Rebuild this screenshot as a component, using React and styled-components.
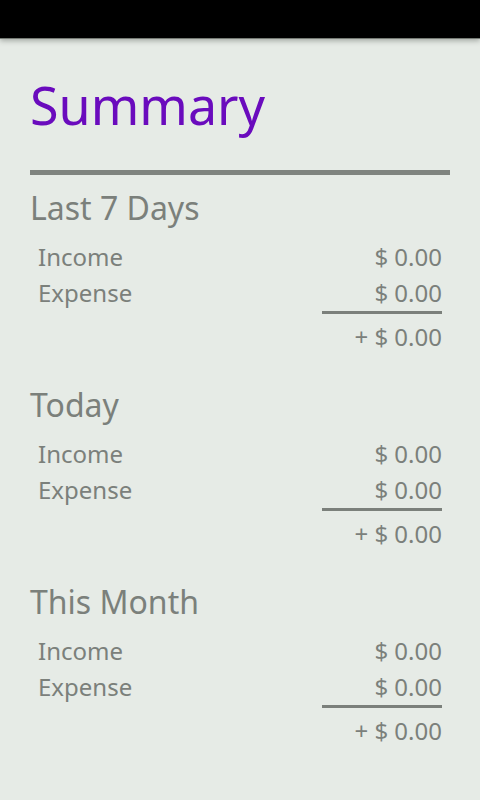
import styled, { createGlobalStyle } from "styled-components";

const Global = createGlobalStyle`
  html, body {
    margin: 0;
    padding: 0;
    background: #e6ebe6;
  }
  body {
    font-family: "Noto Sans", "Open Sans", sans-serif;
  }
`;

const Screen = styled.div`
  width: 480px;
  height: 800px;
  background: #e6ebe6;
  overflow: hidden;
`;

const StatusBar = styled.div`
  height: 38px;
  background: #000;
  box-shadow: 0 1px 0 #767b75, 0 3px 5px rgba(90, 96, 90, 0.45);
  position: relative;
`;

const Content = styled.div`
  padding: 0 30px;
`;

const Title = styled.h1`
  margin: 0 0 25px;
  padding-top: 27px;
  font-size: 52px;
  font-weight: 400;
  line-height: 80px;
  color: #6a0bbd;
`;

const Rule = styled.div`
  height: 5px;
  background: #7f847f;
`;

const Section = styled.section`
  margin-bottom: 17px;
`;

const SectionTitle = styled.h2`
  margin: 0;
  padding-top: 4px;
  font-size: 32px;
  font-weight: 400;
  line-height: 57px;
  color: #7b807b;
`;

const Rows = styled.div`
  padding: 3px 8px 0;
`;

const Row = styled.div`
  display: flex;
  justify-content: space-between;
  align-items: flex-start;
  font-size: 24px;
  line-height: 36px;
  color: #7b807b;
  margin-top: ${(p) => (p.$total ? "5px" : "0")};
`;

const Amount = styled.span`
  display: block;
  min-width: 120px;
  text-align: right;
  border-bottom: ${(p) => (p.$underline ? "3px solid #7b807b" : "none")};
`;

const sections = ["Last 7 Days", "Today", "This Month"];

const App = () => {
  return (
    <Screen>
      <Global />
      <StatusBar />
      <Content>
        <Title>Summary</Title>
        <Rule />
        {sections.map((name) => (
          <Section key={name}>
            <SectionTitle>{name}</SectionTitle>
            <Rows>
              <Row>
                <span>Income</span>
                <Amount>$ 0.00</Amount>
              </Row>
              <Row>
                <span>Expense</span>
                <Amount $underline>$ 0.00</Amount>
              </Row>
              <Row $total>
                <span />
                <Amount>+ $ 0.00</Amount>
              </Row>
            </Rows>
          </Section>
        ))}
      </Content>
    </Screen>
  );
};

export default App;
